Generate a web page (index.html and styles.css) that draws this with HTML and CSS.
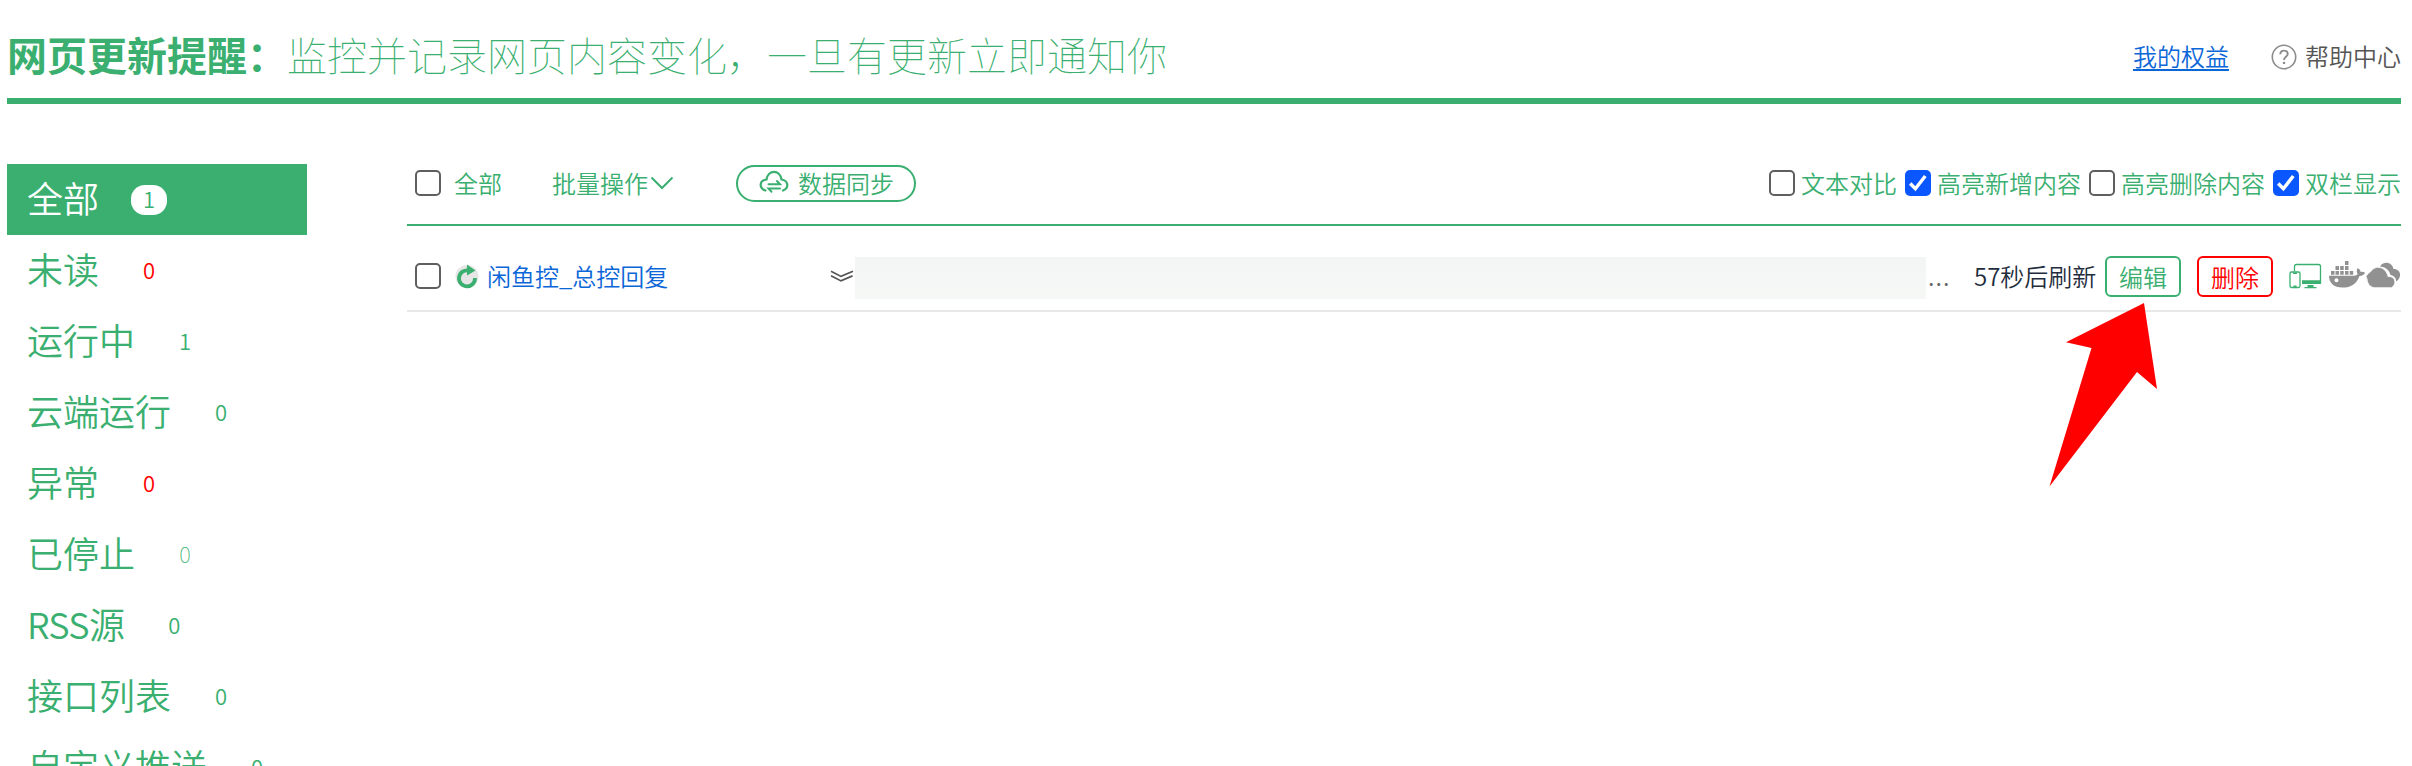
FILE: index.html
```html
<!DOCTYPE html>
<html lang="zh-CN">
<head>
<meta charset="utf-8">
<title>网页更新提醒</title>
<link rel="stylesheet" href="styles.css">
</head>
<body>
<header class="header">
  <h1 class="title">网页更新提醒：<span class="subtitle">监控并记录网页内容变化，一旦有更新立即通知你</span></h1>
  <nav class="links">
    <a class="rights" href="#">我的权益</a>
    <span class="help">
      <svg width="26" height="26" viewBox="0 0 26 26" fill="none" stroke="#8c8c8c" stroke-width="1.6"><circle cx="13" cy="13" r="11.7"/><path d="M9.3 10.3c0-2.2 1.6-3.7 3.7-3.7s3.7 1.4 3.7 3.4c0 2.6-3.7 3.1-3.7 6" stroke-width="1.9"/><path d="M13 17.8v2.2" stroke-width="2.2"/></svg>
      <span class="help-text">帮助中心</span>
    </span>
  </nav>
</header>
<div class="layout">
  <ul class="sidebar">
    <li class="item active"><span class="label">全部</span><span class="count">1</span></li>
    <li class="item"><span class="label">未读</span><span class="count red">0</span></li>
    <li class="item"><span class="label">运行中</span><span class="count">1</span></li>
    <li class="item"><span class="label">云端运行</span><span class="count">0</span></li>
    <li class="item"><span class="label">异常</span><span class="count red">0</span></li>
    <li class="item"><span class="label">已停止</span><span class="count thin">0</span></li>
    <li class="item"><span class="label latin">RSS源</span><span class="count">0</span></li>
    <li class="item"><span class="label">接口列表</span><span class="count">0</span></li>
    <li class="item"><span class="label">自定义推送</span><span class="count">0</span></li>
  </ul>
  <main class="main">
    <div class="toolbar">
      <span class="box"></span>
      <span class="all">全部</span>
      <span class="batch">批量操作<svg width="24" height="14" viewBox="0 0 24 14" fill="none" stroke="currentColor" stroke-width="2"><path d="M1.5 1.5 12 12 22.500 1.500"/></svg></span>
      <button class="sync">
        <svg width="30" height="24" viewBox="0 0 30 24" fill="none" stroke="currentColor" stroke-width="2.2" stroke-linecap="round"><path d="M6.500 20.500C-.5 18 .3 10.500 7.500 9.500 9 -.8 21-.8 22.500 9.500c7 1 7.800 8.500 1.500 11"/><path d="M9.500 14.200h11.500l-3-3.200M21 18.500H9.500l3 3.200" stroke-width="2"/></svg>
        数据同步
      </button>
      <div class="options">
        <label class="option"><span class="box"></span>文本对比</label>
        <label class="option"><span class="box checked"><svg width="26" height="26" viewBox="0 0 26 26"><path d="M5.200 13.500 10.400 18.700 20.300 6" fill="none" stroke="#fff" stroke-width="3.4"/></svg></span>高亮新增内容</label>
        <label class="option"><span class="box"></span>高亮删除内容</label>
        <label class="option"><span class="box checked"><svg width="26" height="26" viewBox="0 0 26 26"><path d="M5.200 13.500 10.400 18.700 20.300 6" fill="none" stroke="#fff" stroke-width="3.4"/></svg></span>双栏显示</label>
      </div>
    </div>
    <div class="row">
      <span class="box"></span>
      <svg class="refresh" width="24" height="26" viewBox="0 0 24 26"><circle cx="12" cy="13.500" r="11.500" fill="#e6e6e6"/><path d="M14 7.600A8 8 0 1 0 20 15" fill="none" stroke="#3aaf70" stroke-width="3.800"/><path d="M12 1.500 20.500 7.500 12 12.500z" fill="#3aaf70"/></svg>
      <a class="name">闲鱼控_总控回复</a>
      <svg class="expand" width="24" height="12" viewBox="0 0 24 12" fill="none" stroke="#555" stroke-width="1.700"><path d="M1 1.200 11 6.400 23 1.200M1 5.700l10 5.200 11.500-5"/></svg>
      <span class="content"></span>
      <span class="dots">...</span>
      <span class="timer">57秒后刷新</span>
      <button class="btn edit">编辑</button>
      <button class="btn delete">删除</button>
      <span class="hosts">
        <svg width="33" height="26" viewBox="0 0 33 26"><path d="M5.500 8V3.500Q5.500 1.500 7.500 1.500h22q2 0 2 2V20h-18" fill="none" stroke="#3aaf70" stroke-width="1.300"/><path d="M13 17.200h19V20q0 1-1 1H13zM18.500 22h6v2h3v1.300h-12V24h3z" fill="#3aaf70"/><rect x="1" y="9" width="10" height="15.500" rx="1.500" fill="#fff" stroke="#3aaf70" stroke-width="1.300"/><path d="M4 10.200h4M4.500 23.200h3" stroke="#3aaf70" stroke-width="1.500"/></svg>
        <svg class="docker" width="36" height="27" viewBox="0 0 36 27" fill="#919191"><path d="M16 0h3.500v4H16zM6.500 5H10v4H6.500zM11.200 5h3.500v4h-3.500zM16 5h3.500v4H16zM2 10h3.500v3.800H2zM6.500 10H10v3.800H6.500zM11.200 10h3.500v3.800h-3.500zM16 10h3.500v3.800H16zM20.700 10h3.500v3.800h-3.500z"/><path fill-rule="evenodd" d="M0 14.800h25q3-.2 3.700-1.800-2-3 0-6 2.800 1.500 3 4 2.600-.6 4.300.7-1.200 3-5.500 3.200C27.500 23 22 26.500 13.500 26.500 4.500 26.500 0 22 0 14.800zM7.500 17.300a2 2 0 1 0 0 4 2 2 0 0 0 0-4z"/></svg>
        <svg class="clouds" width="35" height="26" viewBox="0 0 35 26" fill="#919191"><path d="M14 4.500C17-1 26-.5 27.500 7c6.500 0 8.500 6 4.500 11l-2 1.500c.5-3-2-6-5.500-6.500C23.500 8 19 5 14 4.500z"/><path d="M0 14.500c2-3 3.500-4.500 5-5C9 2.500 20 4.500 22 14.500c6.500-.5 8.500 5.500 5.500 9.500l-2 1.700H8C3 24.500 1.500 21 1 17z" stroke="#fff" stroke-width=".8"/></svg>
      </span>
    </div>
  </main>
</div>
<svg class="pointer" width="110" height="186" viewBox="0 0 110 186"><path d="M95 1 17 40.300 42.500 46 .5 184.500 88 70 108 87z" fill="#f00"/></svg>
</body>
</html>
```
FILE: styles.css
```css
* { box-sizing: border-box; }
body {
  margin: 0;
  padding: 0 11px 0 7px;
  height: 766px;
  overflow: hidden;
  position: relative;
  background: #fff;
  color: #3aaf70;
  font: 350 24px/36px "Noto Sans CJK SC", sans-serif;
  white-space: nowrap;
}
svg { display: block; flex: none; }
.header {
  display: flex;
  justify-content: space-between;
  height: 104px;
  border-bottom: 6px solid #3aaf70;
}
.title { margin: 0; padding-top: 24px; font-size: 40px; line-height: 60px; font-weight: 700; }
.subtitle { font-weight: 100; }
.links { display: flex; gap: 42px; padding-top: 38px; }
.rights { color: #0b66d8; text-decoration: underline; text-decoration-thickness: 2px; text-underline-offset: 3px; }
.help { display: flex; align-items: center; gap: 8px; color: #555; height: 38px; }
.help-text { padding-bottom: 2px; }
.layout { display: flex; padding-top: 60px; gap: 100px; }
.sidebar { width: 300px; margin: 0; padding: 0; list-style: none; flex: none; }
.item {
  display: flex;
  align-items: center;
  height: 71px;
  padding-left: 20px;
  font-size: 36px;
}
.label { padding-bottom: 6px; }
.latin { letter-spacing: -0.7px; }
.active { background: #3aaf70; color: #fff; }
.count {
  width: 36px;
  height: 30px;
  margin-left: 32px;
  border-radius: 14px;
  font-size: 22px;
  line-height: 27px;
  text-align: center;
}
.active .count { background: #fff; color: #3aaf70; }
.count.red { color: #f00; }
.count.thin { font-weight: 100; }
.main { flex: 1; min-width: 0; }
.toolbar {
  display: flex;
  align-items: center;
  height: 62px;
  padding: 0 0 22px 8px;
  border-bottom: 2px solid #3aaf70;
}
.box { width: 26px; height: 26px; flex: none; border: 2px solid #5f5f5f; border-radius: 5px; }
.toolbar > .box { margin-bottom: 1px; }
.checked { border: 0; background: #0b57ff; }
.all { margin-left: 13px; padding-bottom: 1px; }
.batch { display: flex; align-items: center; gap: 2px; margin-left: 50px; }
.sync {
  display: flex;
  align-items: center;
  gap: 9px;
  width: 180px;
  height: 37px;
  margin-left: 62px;
  padding: 0 0 2px 21px;
  border: 2px solid #3aaf70;
  border-radius: 19px;
  background: #fff;
  color: inherit;
  font: inherit;
  line-height: 31px;
}
.options { display: flex; gap: 8px; margin-left: auto; padding-bottom: 1px; }
.option { display: flex; align-items: center; gap: 6px; }
.row {
  display: flex;
  align-items: center;
  height: 86px;
  padding: 16px 0 0 8px;
  border-bottom: 2px solid #e8e8e8;
}
.refresh { margin-left: 14px; }
.name { flex: none; width: 343px; margin-left: 8px; padding-bottom: 1px; color: #0b66d8; }
.content { flex: none; width: 1071px; height: 42px; margin: 3px 0 0 1px; background: linear-gradient(#f3f5f5, #f6f8f6); }
.dots { flex: none; width: 46px; margin-left: 2px; color: #666; letter-spacing: 1px; }
.timer { flex: none; width: 131px; padding-bottom: 1px; color: #1f2d3d; }
.btn {
  flex: none;
  width: 76px;
  height: 41px;
  padding: 0;
  border: 2px solid #3aaf70;
  border-radius: 6px;
  background: #fff;
  color: #3aaf70;
  font: inherit;
  line-height: 35px;
}
.delete { margin-left: 16px; border-color: #f00; color: #f00; }
.hosts { display: flex; align-items: center; margin-left: 16px; }
.docker { margin: -4px 0 0 7px; }
.clouds { margin: -2px 0 0 1px; }
.pointer { position: absolute; left: 2049px; top: 302px; }
```
